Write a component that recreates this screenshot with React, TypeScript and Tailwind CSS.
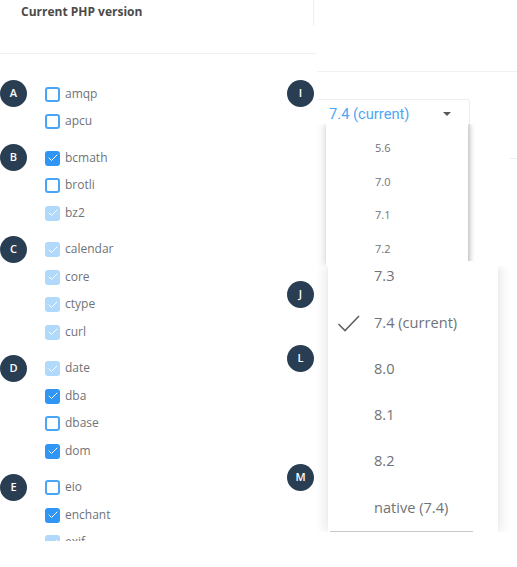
import { Check } from "lucide-react";

type Ext = { name: string; state: "off" | "on" | "locked" };

const groups: { badge: string; items: Ext[] }[] = [
  { badge: "A", items: [{ name: "amqp", state: "off" }, { name: "apcu", state: "off" }] },
  { badge: "B", items: [{ name: "bcmath", state: "on" }, { name: "brotli", state: "off" }, { name: "bz2", state: "locked" }] },
  { badge: "C", items: [{ name: "calendar", state: "locked" }, { name: "core", state: "locked" }, { name: "ctype", state: "locked" }, { name: "curl", state: "locked" }] },
  { badge: "D", items: [{ name: "date", state: "locked" }, { name: "dba", state: "on" }, { name: "dbase", state: "off" }, { name: "dom", state: "on" }] },
  { badge: "E", items: [{ name: "eio", state: "off" }, { name: "enchant", state: "on" }, { name: "exif", state: "locked" }] },
];

function Badge({ label }: { label: string }) {
  return (
    <div className="flex h-[27px] w-[27px] shrink-0 items-center justify-center rounded-full bg-[#293e52] text-[11px] font-semibold text-white">
      {label}
    </div>
  );
}

function Box({ state }: { state: Ext["state"] }) {
  if (state === "off") {
    return <span className="mt-px h-[15px] w-[15px] rounded-[3px] border-2 border-[#4ba5f5] bg-white" />;
  }
  return (
    <span className={`mt-px flex h-[15px] w-[15px] items-center justify-center rounded-[3px] ${state === "on" ? "bg-[#2f96f3]" : "bg-[#b0d9fb]"}`}>
      <Check size={12} strokeWidth={2} color="white" />
    </span>
  );
}

export default function App() {
  return (
    <div className="relative h-[567px] w-[517px] overflow-hidden bg-white font-['Open_Sans',sans-serif] text-[#6f7377]">
      <div className="h-[54px] border-b border-[#f0f1f3] pl-[21px] pt-[3px] text-[12px] font-bold leading-[17px] text-[#4a4a4a]">
        Current PHP version
      </div>

      {/* top-right fragments behind the dropdowns */}
      <div className="absolute left-[313px] top-0 h-[26px] w-[204px] rounded-bl-[3px] border-l border-[#eceef1]" />
      <div className="absolute left-[317px] top-[25px] h-[47px] w-[200px] border-b border-[#f0f1f3] bg-white" />
      <div className="absolute left-[510px] top-[158px] h-px w-[7px] bg-[#eceef1]" />

      <div className="flex">
        <div className="h-[487px] w-[287px] overflow-hidden pt-[26px]">
          {groups.map((g) => (
            <div key={g.badge} className="mb-[9px] flex">
              <div className="w-[45px]">
                <Badge label={g.badge} />
              </div>
              <div>
                {g.items.map((it) => (
                  <div key={it.name} className="flex h-[27.5px] items-center gap-[5px] text-[12px]">
                    <Box state={it.state} />
                    <span>{it.name}</span>
                  </div>
                ))}
              </div>
            </div>
          ))}
        </div>

        <div className="relative flex-1 pt-[26px]">
          <Badge label="I" />
          <div className="mt-[174px]"><Badge label="J" /></div>
          <div className="mt-[37px]"><Badge label="L" /></div>
          <div className="mt-[92px]"><Badge label="M" /></div>
        </div>
      </div>

      {/* select */}
      <div className="absolute left-[317px] top-[99px] flex h-[27px] w-[153px] items-center justify-between rounded-tr-[3px] border-r border-t border-[#eceef1] bg-white pl-[12px] pr-[18px] pt-[2px] font-['Roboto',sans-serif] text-[14.7px] text-[#4ea6f5]">
        <span>7.4 (current)</span>
        <span className="h-0 w-0 border-x-[4px] border-t-[4px] border-x-transparent border-t-[#55595e]" />
      </div>

      {/* upper dropdown */}
      <div className="absolute left-[326px] top-[124px] flex h-[142px] w-[142px] flex-col bg-white pl-[49px] pt-[8px] text-[11px] shadow-[2px_0_5px_rgba(0,0,0,0.25),-4px_0_7px_rgba(0,0,0,0.08)] [clip-path:inset(0_-20px)]">
        {["5.6", "7.0", "7.1", "7.2"].map((v) => (
          <div key={v} className="flex h-[33.4px] items-center">{v}</div>
        ))}
      </div>
      <div className="absolute left-[468px] top-[261px] h-[5px] w-[6px] bg-white" />

      {/* lower dropdown */}
      <div className="absolute left-[328px] top-[266px] h-[266px] w-[170px] overflow-hidden bg-white text-[14.6px] shadow-[5px_0_9px_rgba(0,0,0,0.07),-5px_0_9px_rgba(0,0,0,0.07)] [clip-path:inset(0_-20px)]">
        {["7.3", "7.4 (current)", "8.0", "8.1", "8.2", "native (7.4)"].map((v, i) => (
          <div key={v} className={`relative flex h-[46.3px] items-center pl-[46px] ${i === 0 ? "-mt-[13px]" : ""}`}>
            {i === 1 && (
              <svg className="absolute left-[9px] top-[14px]" width="24" height="20" viewBox="0 0 24 20" fill="none" stroke="#5f6368" strokeWidth="1.6">
                <path d="M1.5 11 L8 17.5 L22 3" />
              </svg>
            )}
            {v}
          </div>
        ))}
        <div className="absolute bottom-0 left-[2px] h-px w-[143px] bg-[#c9c9c9]" />
      </div>
    </div>
  );
}
